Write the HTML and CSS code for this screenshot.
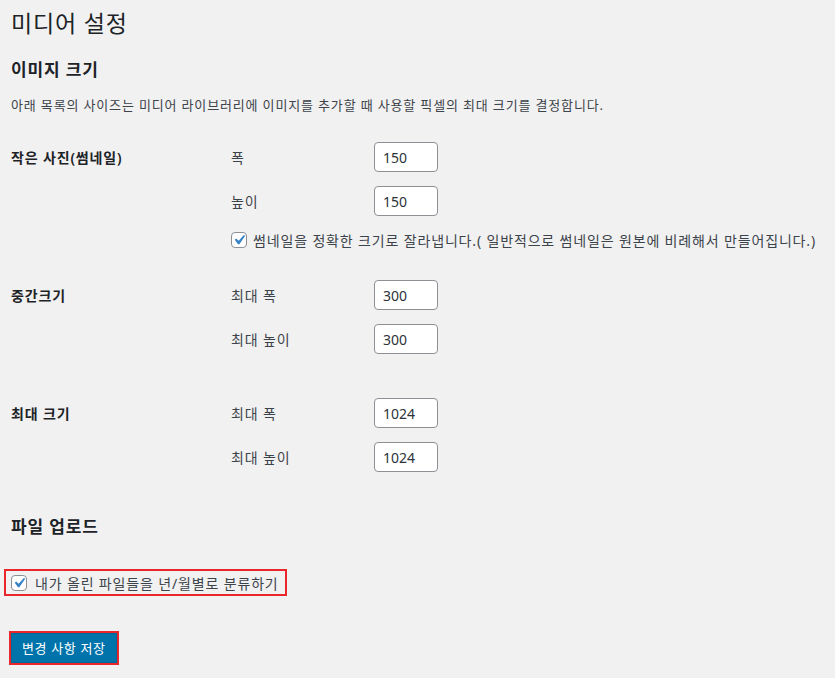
FILE: index.html
```html
<!DOCTYPE html>
<html lang="ko">
<head>
    <meta charset="UTF-8">
    <meta name="viewport" content="width=device-width, initial-scale=1.0">
    <title>미디어 설정</title>
    <link rel="stylesheet" href="styles.css">
</head>
<body>
    <div class="wrap">
        <h1>미디어 설정</h1>

        <form>
            <h2 class="title-image">이미지 크기</h2>
            <p class="description">아래 목록의 사이즈는 미디어 라이브러리에 이미지를 추가할 때 사용할 픽셀의 최대 크기를 결정합니다.</p>

            <div class="form-row">
                <div class="row-label">작은 사진(썸네일)</div>
                <div class="row-fields">
                    <div class="field">
                        <label for="thumbnail_w">폭</label>
                        <input id="thumbnail_w" type="text" value="150">
                    </div>
                    <div class="field">
                        <label for="thumbnail_h">높이</label>
                        <input id="thumbnail_h" type="text" value="150">
                    </div>
                    <label class="check">
                        <span class="checkbox"><svg viewBox="0 0 20 20"><path d="M14.83 4.89l1.34.94-5.81 8.38H9.02L5.78 9.67l1.34-1.25 2.57 2.4z"/></svg></span>
                        썸네일을 정확한 크기로 잘라냅니다.( 일반적으로 썸네일은 원본에 비례해서 만들어집니다.)
                    </label>
                </div>
            </div>

            <div class="form-row row-medium">
                <div class="row-label">중간크기</div>
                <div class="row-fields">
                    <div class="field">
                        <label for="medium_w">최대 폭</label>
                        <input id="medium_w" type="text" value="300">
                    </div>
                    <div class="field">
                        <label for="medium_h">최대 높이</label>
                        <input id="medium_h" type="text" value="300">
                    </div>
                </div>
            </div>

            <div class="form-row row-large">
                <div class="row-label">최대 크기</div>
                <div class="row-fields">
                    <div class="field">
                        <label for="large_w">최대 폭</label>
                        <input id="large_w" type="text" value="1024">
                    </div>
                    <div class="field">
                        <label for="large_h">최대 높이</label>
                        <input id="large_h" type="text" value="1024">
                    </div>
                </div>
            </div>

            <h2 class="title-upload">파일 업로드</h2>

            <label class="check highlight">
                <span class="checkbox"><svg viewBox="0 0 20 20"><path d="M14.83 4.89l1.34.94-5.81 8.38H9.02L5.78 9.67l1.34-1.25 2.57 2.4z"/></svg></span>
                내가 올린 파일들을 년/월별로 분류하기
            </label>

            <div class="submit">
                <span class="highlight-btn"><button type="button" class="button-primary">변경 사항 저장</button></span>
            </div>
        </form>
    </div>
</body>
</html>
```

FILE: styles.css
```css
body {
    margin: 0;
    background: #f1f1f1;
    color: #3c434a;
    font-family: "Noto Sans", "Noto Sans CJK KR", sans-serif;
    font-size: 13px;
    letter-spacing: 0.065em;
}
.wrap {
    padding: 8px 0 0 11px;
}
h1 {
    margin: 0;
    font-size: 23px;
    font-weight: 400;
    line-height: 30px;
    color: #1d2327;
}
h2 {
    margin: 0;
    font-size: 17px;
    font-weight: 600;
    line-height: 24px;
    color: #1d2327;
}
.title-image {
    margin-top: 20px;
}
.description {
    margin: 13px 0 0;
    line-height: 20px;
}
.form-row {
    display: flex;
    margin-top: 27px;
}
.row-medium {
    margin-top: 30px;
}
.row-large {
    margin-top: 44px;
}
.row-label {
    width: 220px;
    height: 30px;
    display: flex;
    align-items: center;
    font-size: 14px;
    font-weight: 600;
    color: #1d2327;
}
.row-fields {
    display: flex;
    flex-direction: column;
    gap: 14px;
    font-size: 14px;
}
.field {
    display: flex;
    align-items: center;
    height: 30px;
}
.field label {
    width: 143px;
}
.field input {
    box-sizing: border-box;
    width: 64px;
    height: 30px;
    padding: 0 8px;
    border: 1px solid #8c8f94;
    border-radius: 4px;
    background: white;
    color: #2c3338;
    font-family: inherit;
    font-size: 14px;
    letter-spacing: 0;
}
.check {
    display: flex;
    align-items: center;
    height: 20px;
    gap: 6px;
    font-size: 14px;
}
.checkbox {
    box-sizing: border-box;
    width: 16px;
    height: 16px;
    border: 1px solid #8c8f94;
    border-radius: 4px;
    background: white;
    display: flex;
    align-items: center;
    justify-content: center;
}
.checkbox svg {
    width: 20px;
    height: 20px;
    margin: -3px;
    fill: #3582c4;
}
.title-upload {
    margin-top: 43px;
}
.highlight {
    display: inline-flex;
    box-sizing: border-box;
    height: 27px;
    margin: 30px 0 0 -7px;
    padding: 0 6px 0 5px;
    border: 2px solid #e8262b;
    gap: 8px;
}
.submit {
    margin-top: 34px;
    margin-left: -2px;
}
.highlight-btn {
    display: inline-block;
    border: 2px solid #e8262b;
    line-height: 0;
}
.button-primary {
    height: 30px;
    padding: 0 10px;
    background: #0073aa;
    border: 1px solid #006799;
    border-radius: 0;
    color: white;
    font-family: inherit;
    font-size: 13px;
    letter-spacing: 0.05em;
    cursor: pointer;
}
```
